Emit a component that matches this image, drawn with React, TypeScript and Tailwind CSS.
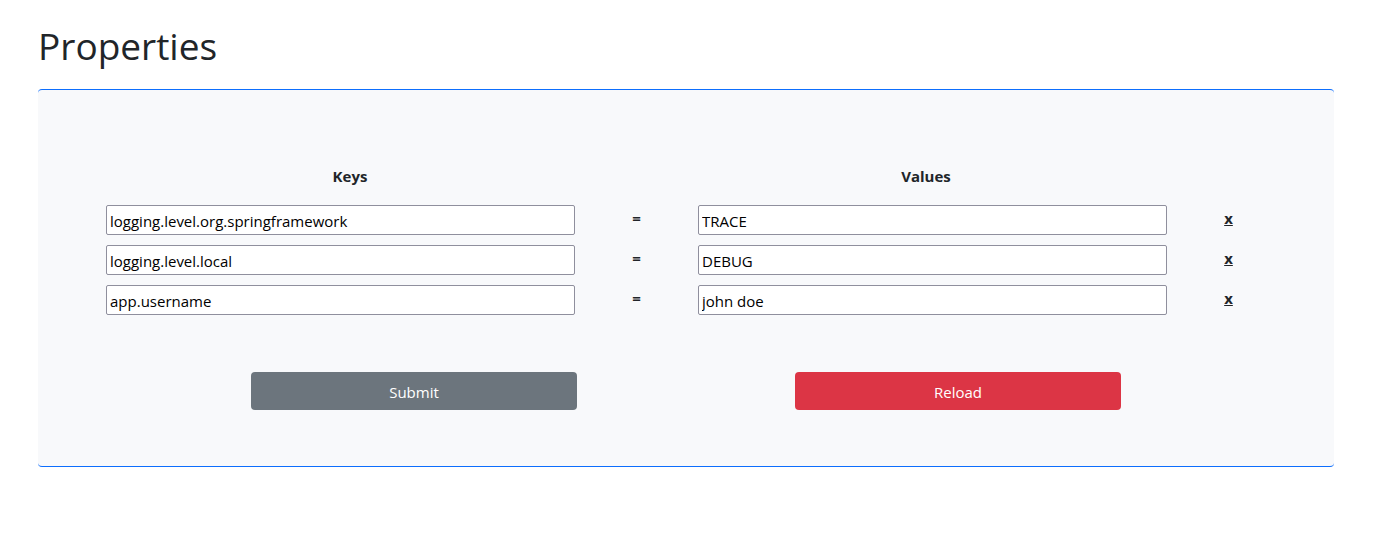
import { useState } from "react";

type Property = { id: number; key: string; value: string };

const initial: Property[] = [
  { id: 1, key: "logging.level.org.springframework", value: "TRACE" },
  { id: 2, key: "logging.level.local", value: "DEBUG" },
  { id: 3, key: "app.username", value: "john doe" },
];

const inputClass =
  "h-[30px] w-full min-w-0 rounded-[2px] border border-[#8f8f9d] bg-white px-[3px] pt-px text-[15px] text-black";
const buttonClass =
  "mx-auto h-[38px] w-3/5 rounded-[4px] pt-px text-center text-[15px] leading-6 text-white";

export default function App() {
  const [rows, setRows] = useState(initial);

  const update = (id: number, field: "key" | "value", text: string) =>
    setRows(rows.map((r) => (r.id === id ? { ...r, [field]: text } : r)));

  return (
    <main className="min-h-screen bg-white pt-[22px] pr-[47px] pl-[38px] font-['Open_Sans','Noto_Sans',sans-serif] text-[#212529]">
      <h1 className="text-[37px] leading-[48px]">Properties</h1>

      <form
        className="mt-[19px] rounded-[4px] border-y border-[#0d6efd] bg-[#f8f9fb] pt-[74px] pb-14"
        onSubmit={(e) => e.preventDefault()}
      >
        <div className="grid grid-cols-2 pr-[120px] pl-6 text-center text-[15px] leading-6 font-bold">
          <span>Keys</span>
          <span>Values</span>
        </div>

        <div className="mt-[17px] flex flex-col gap-[10px] pr-11 pl-[68px]">
          {rows.map((row) => (
            <div key={row.id} className="grid grid-cols-[469fr_123fr_469fr_123fr]">
              <input
                type="text"
                aria-label="Key"
                className={inputClass}
                value={row.key}
                onChange={(e) => update(row.id, "key", e.target.value)}
              />
              <span className="text-center text-[15px] leading-[26px] font-bold">=</span>
              <input
                type="text"
                aria-label="Value"
                className={inputClass}
                value={row.value}
                onChange={(e) => update(row.id, "value", e.target.value)}
              />
              <span className="text-center text-[15px] leading-[26px] font-bold">
                <a
                  href="#remove"
                  className="underline"
                  onClick={(e) => {
                    e.preventDefault();
                    setRows(rows.filter((r) => r.id !== row.id));
                  }}
                >
                  x
                </a>
              </span>
            </div>
          ))}
        </div>

        <div className="mt-[57px] grid grid-cols-2 px-[104px]">
          <button type="submit" className={`${buttonClass} bg-[#6c757d]`}>
            Submit
          </button>
          <button
            type="button"
            className={`${buttonClass} bg-[#dc3545]`}
            onClick={() => setRows(initial)}
          >
            Reload
          </button>
        </div>
      </form>
    </main>
  );
}
